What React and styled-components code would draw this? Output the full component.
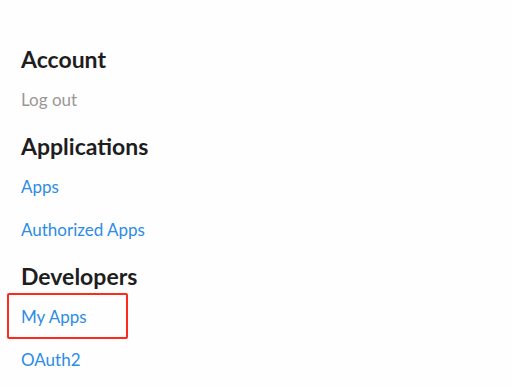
import styled, { createGlobalStyle } from "styled-components";

const GlobalStyle = createGlobalStyle`
  html, body {
    margin: 0;
    padding: 0;
    background: #fefefe;
  }
  body {
    font-family: "Lato", "Open Sans", sans-serif;
  }
`;

const sections = [
  { title: "Account", links: [{ label: "Log out", muted: true }] },
  {
    title: "Applications",
    links: [{ label: "Apps" }, { label: "Authorized Apps" }],
  },
  {
    title: "Developers",
    links: [{ label: "My Apps", highlighted: true }, { label: "OAuth2" }],
  },
];

export default function App() {
  return (
    <>
      <GlobalStyle />
      <Sidebar>
        {sections.map((section) => (
          <Section key={section.title}>
            <Heading>{section.title}</Heading>
            {section.links.map((link) => (
              <NavLink
                key={link.label}
                $muted={link.muted}
                $highlighted={link.highlighted}
              >
                {link.label}
              </NavLink>
            ))}
          </Section>
        ))}
      </Sidebar>
    </>
  );
}

const Sidebar = styled.nav`
  display: flex;
  flex-direction: column;
  padding: 34px 0 0 21px;
  width: 512px;
  height: 387px;
  box-sizing: border-box;
`;

const Section = styled.section`
  display: flex;
  flex-direction: column;
`;

const Heading = styled.h2`
  margin: 0;
  padding-top: 6px;
  height: 44px;
  box-sizing: border-box;
  display: flex;
  align-items: center;
  font-size: 23px;
  font-weight: 700;
  color: #1f1e1e;
`;

const NavLink = styled.a`
  position: relative;
  height: 43px;
  display: flex;
  align-items: center;
  align-self: flex-start;
  font-size: 17px;
  color: ${(p) => (p.$muted ? "#9b9696" : "#2d8ce6")};
  cursor: pointer;

  &::after {
    content: "";
    display: ${(p) => (p.$highlighted ? "block" : "none")};
    position: absolute;
    left: -14px;
    top: -2px;
    width: 121px;
    height: 46px;
    box-sizing: border-box;
    border: 2px solid #ff2a1a;
    border-radius: 2px;
  }
`;
